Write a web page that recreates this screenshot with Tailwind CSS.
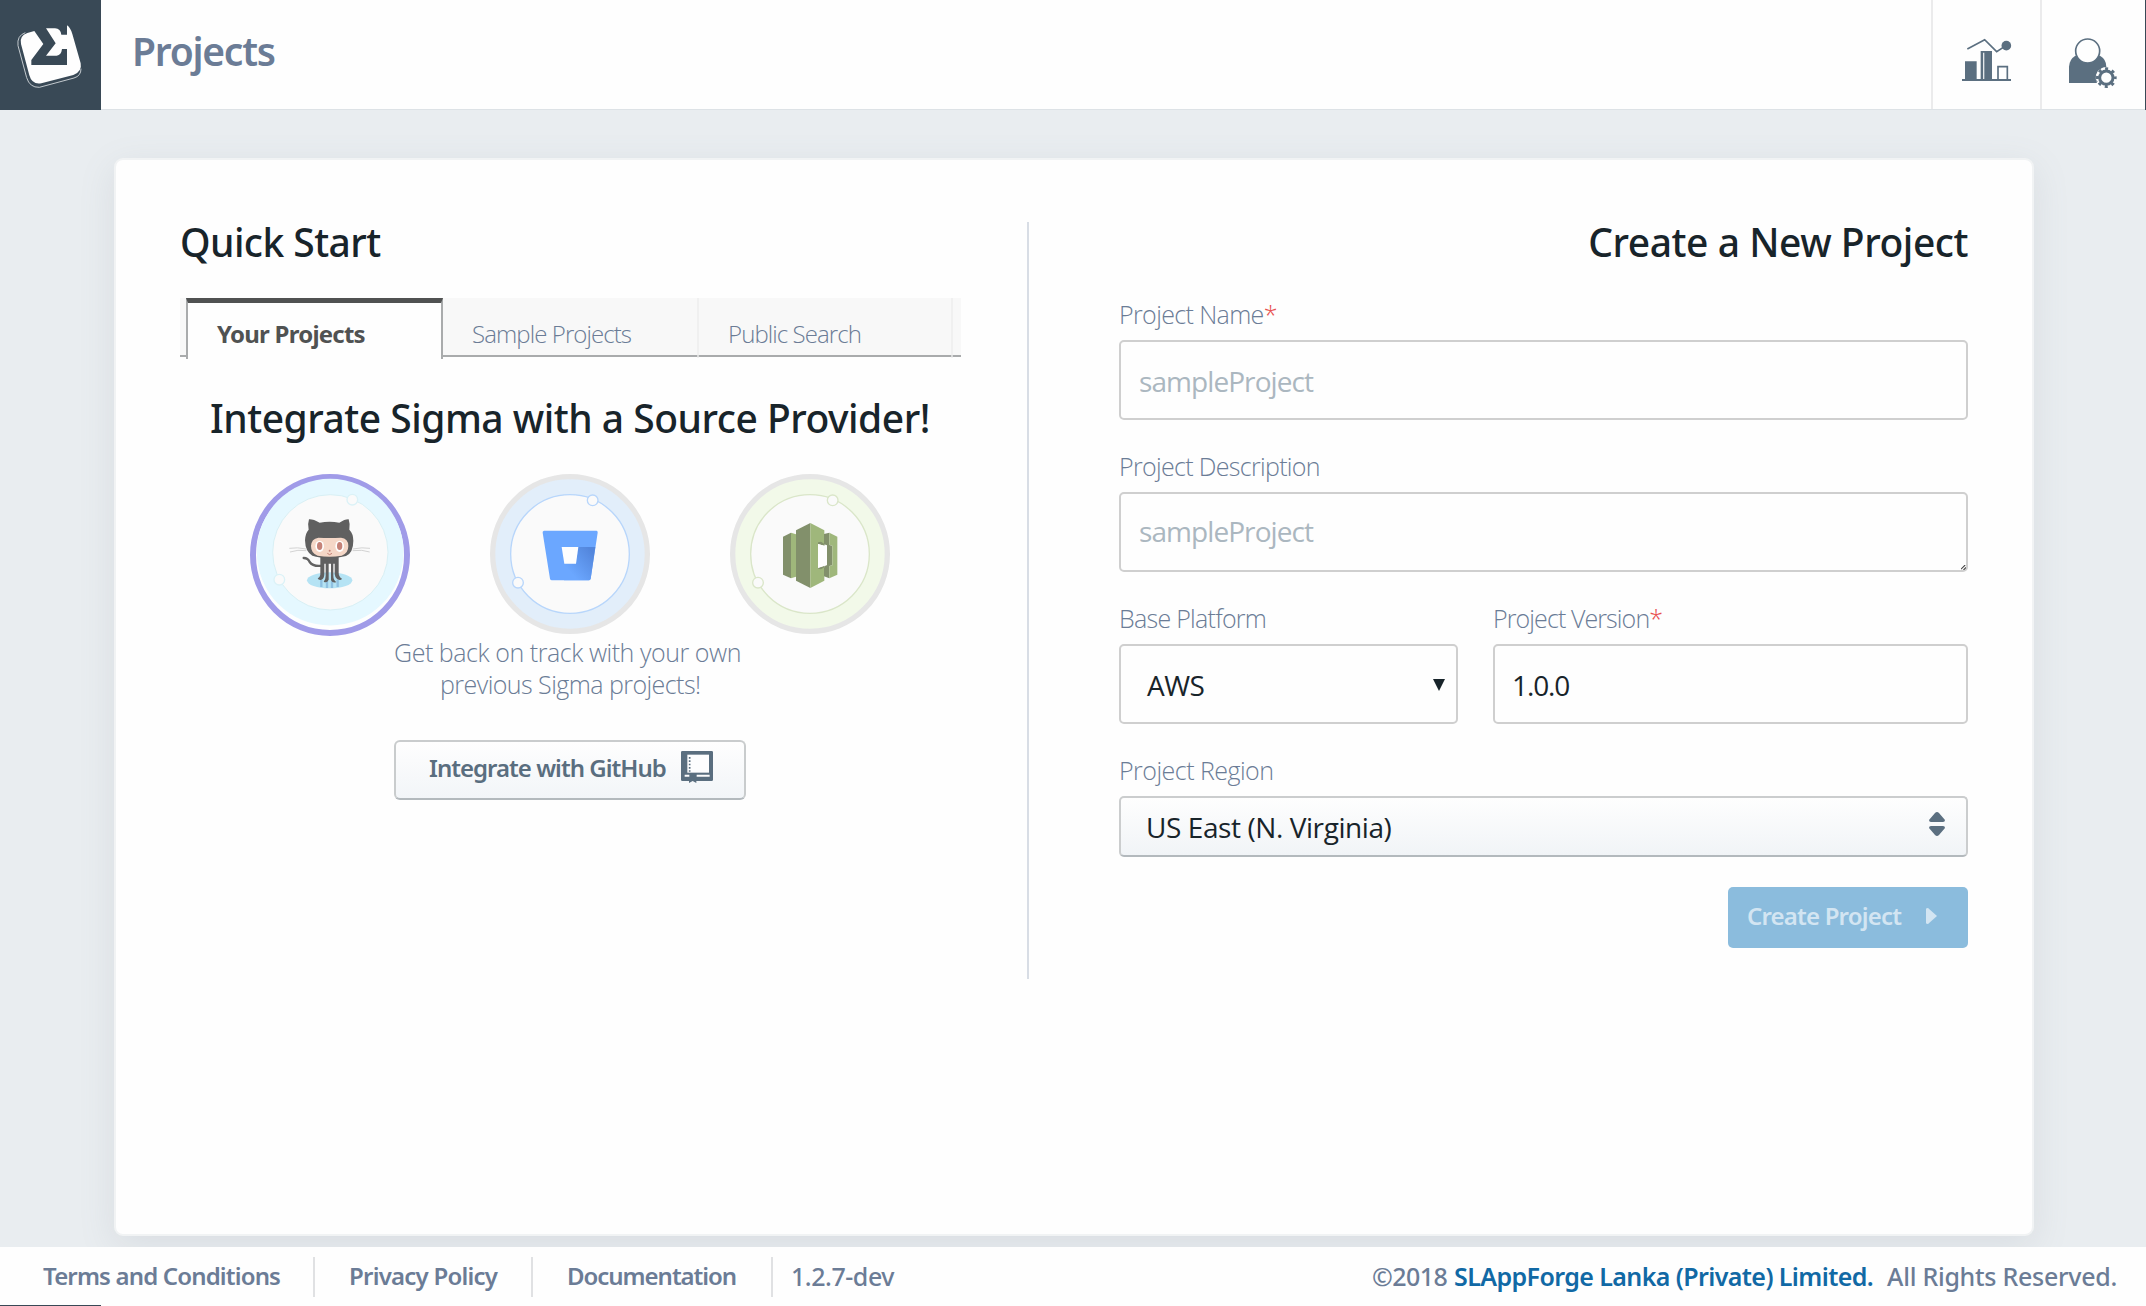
<!DOCTYPE html>
<html lang="en">
<head>
<meta charset="utf-8">
<title>Projects</title>
<script src="https://cdn.jsdelivr.net/npm/@tailwindcss/browser@4"></script>
</head>
<body class="bg-[#e9edf0] font-['Noto_Sans','Open_Sans',sans-serif] text-[#6b7c96]">
<div class="relative flex h-[1306px] w-[2146px] flex-col overflow-hidden">

  <header class="flex h-[110px] shrink-0 border-b border-[#dde2e6] bg-[#fefefe]">
    <div class="h-[110px] w-[101px] bg-[#394956]">
      <svg class="h-[110px] w-[101px]" viewBox="0 0 303 330" fill="none">
        <path d="M103 93L82 99Q57 108 63 132L88 226Q96 255 124 250L220 225Q247 215 242 190L217 102Q211 82 201 76V104H184Q182 86 165 85H138L167 130L138 167H170Q184 165 186 147H201V195H94V180L130 132Z" fill="#fefefe"/>
        <path d="M76 98Q50 107 54 137L80 233Q89 263 118 262L222 234Q243 228 243 206" stroke="#c3c9ce" stroke-width="3"/>
      </svg>
    </div>
    <h1 class="ml-[31px] text-[39px] leading-[102px] font-semibold tracking-[-0.032em]">Projects</h1>
    <div class="ml-auto flex">
      <div class="w-[109px] border-l-2 border-[#ebebec] pt-[37px] pl-[27px]">
        <svg class="h-[45px] w-[53px]" viewBox="180 111 159 135" fill="none" stroke="#5b6f80">
          <path d="M186 240H333" stroke-width="6"/>
          <path d="M195 184H230V240H195ZM242 153H276V240H242Z" fill="#5b6f80" stroke="none"/>
          <path d="M251 158V237" stroke="#e4e8eb" stroke-width="4"/>
          <path d="M294 240V200H322V240" stroke-width="5"/>
          <path d="M202 147L254 119L290 155L318 137" stroke-width="5"/>
          <circle cx="319" cy="137" r="14.5" fill="#5b6f80" stroke="none"/>
        </svg>
      </div>
      <div class="w-[105px] border-l-2 border-[#ebebec] pt-[37px] pl-[25px]">
        <svg class="h-[52px] w-[51px]" viewBox="501 111 153 156" fill="none">
          <path d="M507 249V200Q508 178 526 167H600Q619 178 619 200V249Z" fill="#5b6f80"/>
          <circle cx="563" cy="153" r="36" fill="#fefefe" stroke="#5b6f80" stroke-width="5"/>
          <circle cx="619" cy="233" r="32" fill="#fefefe"/>
          <path d="M590 215Q583 224 585 238L592 246M596 209L610 199" stroke="#5b6f80" stroke-width="3"/>
          <circle cx="619" cy="233" r="20" stroke="#5b6f80" stroke-width="9"/>
          <circle cx="619" cy="233" r="26.5" stroke="#5b6f80" stroke-width="9" stroke-dasharray="9 11.81" stroke-dashoffset="4.5"/>
        </svg>
      </div>
      <div class="h-[110px] w-px bg-[#394956]"></div>
    </div>
  </header>

  <main class="flex grow justify-center pt-[48px] pb-[11px] pl-[2px]">
    <section class="flex w-[1920px] rounded-[9px] border-2 border-[#f1f3f4] bg-[#fefefe] px-[64px] pt-[62px] shadow-[0_10px_36px_rgba(120,130,140,0.14)]">

      <div class="w-[782px]">
        <h2 class="h-[40px] text-[39px] leading-[40px] font-medium tracking-[-0.0145em] text-[#18242a]">Quick Start</h2>
        <nav class="relative mt-[36px] flex h-[61px] w-[781px] text-[24px] leading-[71px]">
          <div class="absolute inset-x-0 top-0 h-[59px] border-b-2 border-[#a9abac] bg-[#f8f8f8]"></div>
          <div class="relative ml-[6px] h-[61px] w-[257px] border-x-2 border-t-[5px] border-x-[#a9abac] border-t-[#505252] bg-[#fefefe] pl-[29px] leading-[62px] font-bold tracking-[-0.032em] text-[#505252]">Your Projects</div>
          <div class="relative h-[60px] w-[256px] border-r-2 border-[#ececec]/70 pl-[29px] font-['Open_Sans'] font-light tracking-[-0.038em]">Sample Projects</div>
          <div class="relative h-[60px] w-[254px] border-r-2 border-[#ececec]/70 pl-[29px] font-['Open_Sans'] font-light tracking-[-0.038em]">Public Search</div>
        </nav>
        <h3 class="mt-[39px] h-[40px] pl-[30px] text-[39px] leading-[40px] font-medium tracking-[-0.0128em] whitespace-nowrap text-[#18242a]">Integrate Sigma with a Source Provider!</h3>

        <div class="mt-[36px] flex h-[162px] gap-[80px] pl-[70px]">
          <svg class="h-[162px] w-[160px]" viewBox="63 42 480 486">
            <ellipse cx="303" cy="285" rx="231" ry="234" fill="#fefefe" stroke="#a09be8" stroke-width="18"/>
            <circle cx="303.500" cy="276.500" r="220" fill="#e5f8ff"/>
            <circle cx="304" cy="277" r="173" fill="#fafafa" stroke="#d8f0f5" stroke-width="3"/>
            <g fill="#fafafa" stroke="#dbf2f7" stroke-width="4"><circle cx="370" cy="119" r="16"/><circle cx="151" cy="359" r="16"/></g>
            <ellipse cx="302" cy="361" rx="68" ry="24" fill="#b5e3f4"/>
            <path d="M277 360V381M294 362V384M309 362V384M326 360V381" stroke="#8fc0e0" stroke-width="7" fill="none"/>
            <path d="M224 294Q237 294 242 306Q252 321 281 317" stroke="#626262" stroke-width="7" fill="none" stroke-linecap="round"/>
            <path d="M274 288H329V338Q329 350 339 356Q336 363 325 358Q318 353 317 342V311H313V347Q313 360 322 366Q312 371 306 361V311H299V359Q294 370 284 365Q290 358 290 347V311H286V342Q286 357 276 360Q268 361 266 355Q275 351 274 339Z" fill="#606060"/>
            <path d="M240 178Q252 177 272 188Q302 183 331 188Q349 177 359 178Q364 193 361 209Q373 221 373 242Q373 278 351 288Q330 294 302 294Q271 294 250 287Q229 276 228 241Q229 219 239 209Q235 193 240 178Z" fill="#606060"/>
            <path d="M268 233Q302 235 336 233Q358 235 358 258Q358 280 338 287Q302 293 266 287Q246 280 246 258Q247 236 268 233Z" fill="#f5d7c7"/>
            <g fill="#fff"><ellipse cx="272" cy="259" rx="13" ry="17"/><ellipse cx="332" cy="259" rx="13" ry="17"/></g>
            <g fill="#c58278"><ellipse cx="272" cy="258" rx="8" ry="12"/><ellipse cx="332" cy="258" rx="8" ry="12"/><circle cx="302" cy="272" r="3"/></g>
            <path d="M295 280Q302 288 309 280" fill="none" stroke="#c58278" stroke-width="3"/>
            <path d="M181 265Q205 261 232 267M183 276Q206 268 232 272M371 267Q400 261 423 265M371 272Q400 268 422 276" fill="none" stroke="#d3d3d3" stroke-width="3"/>
          </svg>
          <svg class="size-[160px]" viewBox="783 42 480 480">
            <defs><linearGradient id="bb" x1="1" y1="0" x2="0.2" y2="0.75"><stop offset="0.15" stop-color="#5386dc"/><stop offset="1" stop-color="#6ba7ff"/></linearGradient></defs>
            <circle cx="1023" cy="282" r="232" fill="#e2eefa" stroke="#e6e6e6" stroke-width="16"/>
            <circle cx="1023" cy="282" r="178" fill="#fafafa" stroke="#b8d6fb" stroke-width="4"/>
            <g fill="#fafafa" stroke="#b8d6fb" stroke-width="4"><circle cx="1091" cy="121" r="16"/><circle cx="867" cy="368" r="16"/></g>
            <path d="M945 212H1103Q1107 213 1106 218L1085 356Q1084 361 1079 361H969Q964 361 963 356L941 218Q940 213 945 212Z" fill="#6ba7ff"/>
            <path d="M1047 261H1099L1085 356Q1084 361 1079 361H1005L1005 311H1041Z" fill="url(#bb)"/>
            <path d="M998 261H1048L1041 311H1006Z" fill="#fefefe"/>
          </svg>
          <svg class="size-[160px]" viewBox="123 42 480 480">
            <circle cx="363" cy="282" r="232" fill="#f2f9e9" stroke="#e6e6e6" stroke-width="16"/>
            <circle cx="363" cy="282" r="178" fill="#fafafa" stroke="#dae6c9" stroke-width="4"/>
            <g fill="#fafafa" stroke="#dae6c9" stroke-width="4"><circle cx="431" cy="121" r="16"/><circle cx="207" cy="368" r="16"/></g>
            <path d="M282 230L306 218V355L282 344Z" fill="#82906b"/>
            <path d="M306 218L321 223V350L306 355Z" fill="#9fb77b"/>
            <path d="M321 211L364 189V384L321 362Z" fill="#82906b"/>
            <path d="M364 189L406 211V257L387 249V326L406 318V362L364 384Z" fill="#9fb77b"/>
            <path d="M405 222L421 218V255L430 257V316L421 318V355L405 349V318L414 315V256L405 253ZM387 247L396 245L406 252V257L387 252ZM387 326L396 328L406 322V317L387 323Z" fill="#82906b"/>
            <path d="M421 218L445 230V344L421 355V318L430 316V257L421 255Z" fill="#9fb77b"/>
            <path d="M387 252L406 257H414V315L387 324Z" fill="#fefefe"/>
          </svg>
        </div>

        <div class="pl-[214px] font-['Open_Sans'] text-[25px] leading-[32px] font-light whitespace-nowrap">
          <p class="tracking-[-0.018em]">Get back on track with your own</p>
          <p class="pl-[46px] tracking-[-0.022em]">previous Sigma projects!</p>
        </div>
        <button class="mt-[40px] ml-[214px] flex h-[60px] w-[352px] items-center rounded-[6px] border-2 border-[#c9cccd] border-b-[#b3b9bd] bg-linear-to-b from-[#fefefe] to-[#f2f5f8] pl-[33px] text-[24px] font-semibold tracking-[-0.041em] text-[#5a6e7f]">
          <span class="-mt-[4px] whitespace-nowrap">Integrate with GitHub</span>
          <svg class="-mt-[6px] ml-[15px] h-[32px] w-[32px]" viewBox="903 366 96 96">
            <path d="M907 366H995Q999 366 999 370V452Q999 456 995 456H949V462L938 456L927 462V456H907Q903 456 903 452V370Q903 366 907 366Z" fill="#5a6e7f"/>
            <path d="M922 377H987V431H922Z" fill="#fdfdfe"/>
            <path d="M914 437H928V443H914ZM950 437H989V443H950Z" fill="#fdfdfe"/>
            <path d="M929 384V428" stroke="#5a6e7f" stroke-width="5" stroke-dasharray="5 5"/>
          </svg>
        </button>
      </div>

      <div class="ml-[65px] h-[757px] w-[2px] bg-[#d8dde5]"></div>

      <form class="ml-[90px] w-[849px]">
        <h2 class="h-[40px] text-right text-[39px] leading-[40px] font-medium tracking-[-0.0118em] text-[#18242a]">Create a New Project</h2>
        <div class="mt-[36px] grid grid-cols-[339px_475px] gap-x-[35px] gap-y-[30px] font-['Open_Sans'] text-[25px] leading-[32px] font-light text-[#6b7c96]">
          <div class="col-span-2">
            <div class="tracking-[-0.025em]">Project Name<span class="text-[#e8504f]">*</span></div>
            <div class="mt-[10px] h-[80px] rounded-[5px] border-2 border-[#cfcfcf] pl-[18px] text-[28px] leading-[79px] font-normal tracking-[-0.033em] text-[#abb7c0]">sampleProject</div>
          </div>
          <div class="col-span-2">
            <div class="tracking-[-0.027em]">Project Description</div>
            <div class="relative mt-[10px] h-[80px] rounded-[5px] border-2 border-[#cfcfcf] pl-[18px] text-[28px] leading-[74px] font-normal tracking-[-0.033em] text-[#abb7c0]">sampleProject
              <svg class="absolute right-0 bottom-0 size-[5px]" viewBox="0 0 6 6"><path d="M0 5L5 0M3 6L6 3" stroke="#444" stroke-width="1.300"/></svg>
            </div>
          </div>
          <div>
            <div class="tracking-[-0.029em]">Base Platform</div>
            <div class="mt-[10px] flex h-[80px] justify-between rounded-[5px] border-2 border-[#cfcfcf] pr-[11px] pl-[26px] text-[28px] leading-[79px] font-normal tracking-[-0.02em] text-[#18242a]">AWS
              <svg class="mt-[33px] h-[12px] w-[12px]" viewBox="0 0 12 12"><path d="M0 0H12L6 12Z" fill="#18242a"/></svg>
            </div>
          </div>
          <div>
            <div class="tracking-[-0.036em]">Project Version<span class="text-[#e8504f]">*</span></div>
            <div class="mt-[10px] h-[80px] rounded-[5px] border-2 border-[#cfcfcf] pl-[17px] text-[28px] leading-[79px] font-normal tracking-[-0.04em] text-[#18242a]">1.0.0</div>
          </div>
          <div class="col-span-2">
            <div class="tracking-[-0.021em]">Project Region</div>
            <div class="mt-[10px] flex h-[61px] justify-between rounded-[5px] border-2 border-[#cbcdce] border-b-[#b3b9bd] bg-linear-to-b from-[#fefefe] to-[#f1f4f7] pr-[20px] pl-[25px] text-[28px] leading-[58px] font-normal tracking-[-0.015em] text-[#18242a]">US East (N. Virginia)
              <svg class="mt-[13px] h-[26px] w-[18px]" viewBox="0 0 18 26"><path d="M7 2Q9 0 11 2L17 9Q17 11 15 11H3Q1 11 1 9ZM7 24Q9 26 11 24L17 17Q17 15 15 15H3Q1 15 1 17Z" fill="#5b6f80"/></svg>
            </div>
          </div>
        </div>
        <button class="mt-[30px] ml-auto flex h-[61px] w-[240px] items-center rounded-[5px] bg-[#8bbcdd] pl-[19px] text-[24px] font-semibold tracking-[-0.034em] text-[#d3e5f2]">
          <span class="-mt-[3px] whitespace-nowrap">Create Project</span>
          <svg class="-mt-[3px] ml-[25px] h-[16px] w-[11px]" viewBox="0 0 11 16"><path d="M0 1Q0 0 2 0L11 8L2 16Q0 16 0 15Z" fill="#d3e5f2"/></svg>
        </button>
      </form>
    </section>
  </main>

  <footer class="relative flex h-[59px] shrink-0 bg-[#fefefe] pl-[43px] text-[24px] leading-[58px] font-semibold whitespace-nowrap">
    <span class="w-[270px] tracking-[-0.035em]">Terms and Conditions</span>
    <i class="mt-[10px] h-[40px] w-[2px] bg-[#e0e1e3]"></i>
    <span class="w-[216px] pl-[34px] tracking-[-0.032em]">Privacy Policy</span>
    <i class="mt-[10px] h-[40px] w-[2px] bg-[#e0e1e3]"></i>
    <span class="w-[238px] pl-[34px] tracking-[-0.043em]">Documentation</span>
    <i class="mt-[10px] h-[40px] w-[2px] bg-[#e0e1e3]"></i>
    <span class="pl-[18px] text-[25px] font-medium tracking-[-0.018em]">1.2.7-dev</span>
    <span class="mr-[29px] ml-auto flex text-[25px] font-medium">
      <span class="w-[82px] tracking-[-0.024em]">©2018</span>
      <span class="w-[433px] font-semibold tracking-[-0.024em] text-[#1169a5]">SLAppForge Lanka (Private) Limited.</span>
      <span class="tracking-[-0.011em]">All Rights Reserved.</span>
    </span>
    <div class="absolute bottom-0 left-0 h-px w-[101px] bg-[#394956]"></div>
  </footer>
</div>
</body>
</html>
